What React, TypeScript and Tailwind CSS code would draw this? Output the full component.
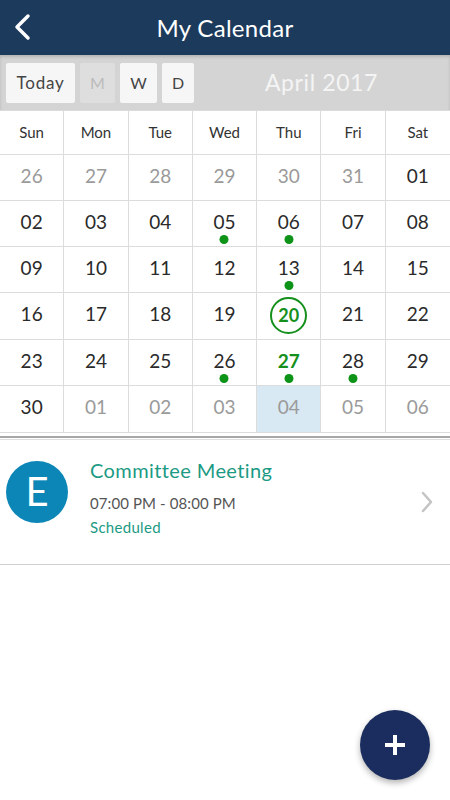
import React from "react";

type Cell = { d: string; muted?: boolean; dot?: boolean; today?: boolean; bold?: boolean; sel?: boolean };

const rows: Cell[][] = [
  [{ d: "26", muted: true }, { d: "27", muted: true }, { d: "28", muted: true }, { d: "29", muted: true }, { d: "30", muted: true }, { d: "31", muted: true }, { d: "01" }],
  [{ d: "02" }, { d: "03" }, { d: "04" }, { d: "05", dot: true }, { d: "06", dot: true }, { d: "07" }, { d: "08" }],
  [{ d: "09" }, { d: "10" }, { d: "11" }, { d: "12" }, { d: "13", dot: true }, { d: "14" }, { d: "15" }],
  [{ d: "16" }, { d: "17" }, { d: "18" }, { d: "19" }, { d: "20", today: true }, { d: "21" }, { d: "22" }],
  [{ d: "23" }, { d: "24" }, { d: "25" }, { d: "26", dot: true }, { d: "27", dot: true, bold: true }, { d: "28", dot: true }, { d: "29" }],
  [{ d: "30" }, { d: "01", muted: true }, { d: "02", muted: true }, { d: "03", muted: true }, { d: "04", muted: true, sel: true }, { d: "05", muted: true }, { d: "06", muted: true }],
];

const rowH = ["h-[46px]", "h-[46px]", "h-[46px]", "h-[47px]", "h-[46px]", "h-[47px]"];

const days = ["Sun", "Mon", "Tue", "Wed", "Thu", "Fri", "Sat"];

export default function App() {
  return (
    <div className="w-[450px] h-[800px] bg-white relative overflow-hidden" style={{ fontFamily: "Lato, 'Open Sans', sans-serif" }}>
      {/* header */}
      <div className="h-[55px] bg-[#1b3a5c] relative flex items-center justify-center">
        <svg className="absolute left-[12px] top-[13px]" width="20" height="28" viewBox="0 0 20 28">
          <path d="M16 3 L5 14 L16 25" stroke="white" strokeWidth="3.5" fill="none" strokeLinecap="round" strokeLinejoin="round" />
        </svg>
        <span className="text-white text-[24px] tracking-[0.3px]">My Calendar</span>
      </div>
      {/* toolbar */}
      <div className="h-[55px] bg-[#d4d4d4] flex items-center pl-[6px] gap-[5px] shadow-[inset_0_2px_3px_rgba(0,0,0,0.15)]">
        <div className="w-[69px] h-[40px] bg-[#f6f6f6] rounded-[2px] flex items-center justify-center text-[17px] text-[#444] tracking-[0.8px]">Today</div>
        <div className="w-[35px] h-[40px] bg-[#dedede] rounded-[2px] flex items-center justify-center text-[16px] text-[#bbb]">M</div>
        <div className="w-[37px] h-[40px] bg-[#f6f6f6] rounded-[2px] flex items-center justify-center text-[16px] text-[#444]">W</div>
        <div className="w-[32px] h-[40px] bg-[#f6f6f6] rounded-[2px] flex items-center justify-center text-[16px] text-[#444]">D</div>
        <div className="flex-1 flex justify-center pr-[6px] text-[23px] text-[#f4f4f4] tracking-[0.6px]">April 2017</div>
      </div>
      {/* calendar */}
      <div className="border-t border-[#dcdcdc] grid grid-cols-7">
        {days.map((d, i) => (
          <div key={d} className={`h-[44px] flex items-center justify-center text-[15px] text-[#333] border-b border-[#dcdcdc] ${i < 6 ? "border-r" : ""}`}>
            {d}
          </div>
        ))}
        {rows.map((r, ri) =>
          r.map((c, ci) => (
            <div
              key={`${ri}-${ci}`}
              className={`${rowH[ri]} relative flex justify-center border-b border-[#dcdcdc] ${ci < 6 ? "border-r" : ""} ${c.sel ? "bg-[#d8e9f3]" : ""}`}
            >
              {c.today ? (
                <div className="mt-[4px] w-[37px] h-[37px] rounded-full border-[2.5px] border-[#16901c] flex items-center justify-center text-[18px] font-bold text-[#16901c]">
                  {c.d}
                </div>
              ) : (
                <span className={`mt-[9px] text-[19px] leading-[24px] ${c.bold ? "font-bold text-[#16901c]" : c.muted ? "text-[#9a9a9a]" : "text-[#2a2a2a]"}`}>{c.d}</span>
              )}
              {c.dot && <div className="absolute top-[34px] left-1/2 -translate-x-1/2 w-[9px] h-[9px] rounded-full bg-[#0d9418]" />}
            </div>
          ))
        )}
      </div>
      <div className="mt-[3px] h-[2px] bg-[#a8a8a8]" />
      <div className="h-[1px] mt-[1px] bg-[#e0e0e0]" />
      {/* event */}
      <div className="h-[125px] flex items-start border-b border-[#cfcfcf]">
        <div className="ml-[6px] mt-[21px] w-[62px] h-[62px] rounded-full bg-[#0b86b6] flex items-center justify-center text-white text-[40px] pb-[2px]">E</div>
        <div className="ml-[22px] mt-[17px] flex flex-col">
          <span className="text-[20px] text-[#1b9a84] tracking-[0.4px] leading-[26px]">Committee Meeting</span>
          <span className="mt-[10px] text-[15px] text-[#555] leading-[20px] tracking-[0.1px]">07:00 PM - 08:00 PM</span>
          <span className="mt-[4px] text-[15px] text-[#1b9a84] leading-[20px] tracking-[0.3px]">Scheduled</span>
        </div>
        <div className="flex-1" />
        <svg className="mr-[17px] mt-[51px]" width="12" height="22" viewBox="0 0 12 22">
          <path d="M2 2 L10 11 L2 20" stroke="#c4c4c4" strokeWidth="2.5" fill="none" strokeLinecap="round" strokeLinejoin="round" />
        </svg>
      </div>
      {/* FAB */}
      <div className="absolute left-[360px] top-[710px] w-[70px] h-[70px] rounded-full bg-[#1b2d5e] shadow-[0_3px_6px_rgba(0,0,0,0.3)] flex items-center justify-center">
        <svg width="24" height="24" viewBox="0 0 24 24">
          <path d="M12 2 V22 M2 12 H22" stroke="white" strokeWidth="4" />
        </svg>
      </div>
    </div>
  );
}
